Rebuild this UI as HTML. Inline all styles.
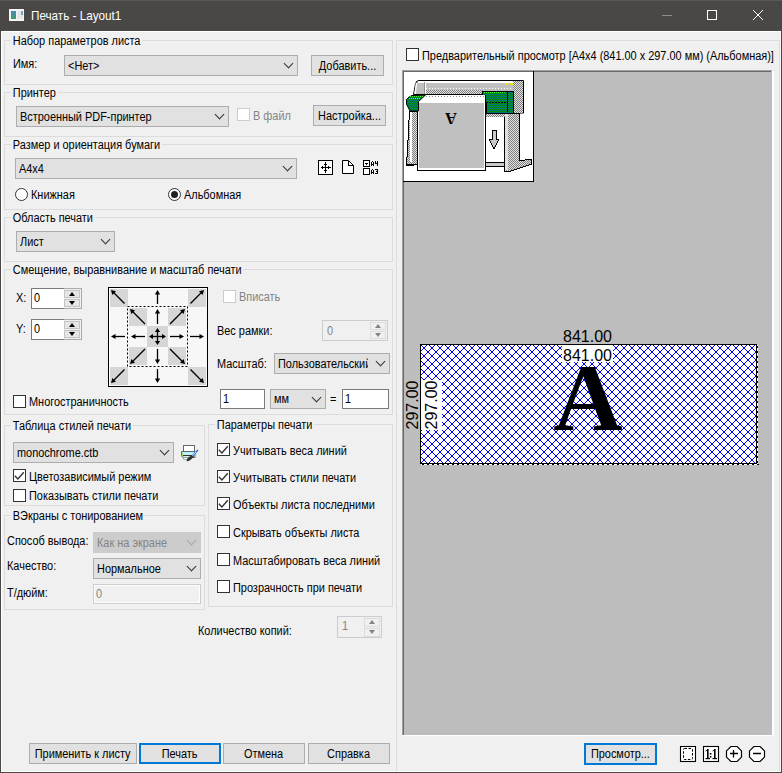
<!DOCTYPE html>
<html><head><meta charset="utf-8">
<style>
*{box-sizing:border-box;margin:0;padding:0}
html,body{width:782px;height:773px;overflow:hidden;background:#f0f0f0}
body{position:relative;font-family:"Liberation Sans",sans-serif;font-size:12px;color:#000}
.a{position:absolute}
.t{position:absolute;white-space:nowrap;line-height:17px;transform:scaleX(.91);transform-origin:0 0}
.dis{color:#838383}
.grp{position:absolute;border:1px solid #dcdcdc}
.gl{position:absolute;background:#f0f0f0;padding:0 2px;white-space:nowrap;line-height:17px;transform:scaleX(.91);transform-origin:0 0}
.s{display:inline-block;transform:scaleX(.91);transform-origin:0 50%}
.btn .s{transform-origin:50% 50%}
.cb{position:absolute;background:#e1e1e1;border:1px solid #adadad;white-space:nowrap;line-height:21px;padding-left:3px;overflow:hidden}
.cb::after{content:"";position:absolute;right:5px;top:4px;width:6px;height:6px;border-right:1px solid #333;border-bottom:1px solid #333;transform:rotate(45deg)}
.cb.dcb{background:#cccccc;border-color:#cccccc;color:#838383}
.cb.dcb::after{border-color:#a6a6a6}
.btn{position:absolute;background:#e1e1e1;border:1px solid #adadad;text-align:center;white-space:nowrap;line-height:21px}
.btn.def{border:2px solid #0078d7;line-height:19px}
.ed{position:absolute;background:#fff;border:1px solid #7a7a7a;line-height:18px;padding-left:2px;white-space:nowrap}
.ed.de{background:#f0f0f0;border-color:#cccccc;color:#838383;box-shadow:inset 0 0 0 1px #fff}
.chk{position:absolute;width:13px;height:13px;border:1px solid #333;background:#fff}
.chk.dc{border-color:#cccccc}
.rad{position:absolute;width:13px;height:13px;border:1px solid #333;border-radius:50%;background:#fff}
.rad.on::after{content:"";position:absolute;left:2px;top:2px;width:7px;height:7px;border-radius:50%;background:#222}
.spin{position:absolute;background:#fff;border:1px solid #7a7a7a}
.spin .sb{position:absolute;right:1px;width:16px;height:8px;background:#e6e6e6;border:1px solid #c4c4c4}
.chk.on{background:#fff}
.ck{position:absolute;left:0;top:0}
.spin .ta{position:absolute;width:0;height:0;border-left:3.5px solid transparent;border-right:3.5px solid transparent}
</style></head><body>
<!-- title bar -->
<div class="a" style="left:0;top:0;width:782px;height:31px;background:#4a4846;border-top:1px solid #5a5957"></div>
<div class="t" style="left:31px;top:7px;color:#fff;font-size:13px;transform:scaleX(.9)">Печать - Layout1</div>

<!-- Group 1 -->
<div class="grp" style="left:4px;top:40px;width:389px;height:45px"></div>
<div class="gl" style="left:11px;top:33px">Набор параметров листа</div>
<div class="t" style="left:13px;top:56px">Имя:</div>
<div class="cb" style="left:64px;top:55px;width:234px;height:21px"><span class="s">&lt;Нет&gt;</span></div>
<div class="btn" style="left:311px;top:55px;width:73px;height:21px"><span class="s">Добавить...</span></div>

<!-- Group 2 -->
<div class="grp" style="left:4px;top:92px;width:389px;height:45px"></div>
<div class="gl" style="left:11px;top:85px">Принтер</div>
<div class="cb" style="left:16px;top:106px;width:213px;height:21px"><span class="s">Встроенный PDF-принтер</span></div>
<div class="chk dc" style="left:237px;top:108px"></div>
<div class="t dis" style="left:253px;top:108px">В файл</div>
<div class="btn" style="left:313px;top:105px;width:73px;height:21px"><span class="s">Настройка...</span></div>

<!-- Group 3 -->
<div class="grp" style="left:4px;top:144px;width:389px;height:66px"></div>
<div class="gl" style="left:11px;top:137px">Размер и ориентация бумаги</div>
<div class="cb" style="left:15px;top:158px;width:282px;height:21px"><span class="s">A4x4</span></div>
<div class="rad" style="left:15px;top:188px"></div>
<div class="t" style="left:31px;top:187px">Книжная</div>
<div class="rad on" style="left:168px;top:188px"></div>
<div class="t" style="left:184px;top:187px">Альбомная</div>

<!-- Group 4 -->
<div class="grp" style="left:4px;top:217px;width:389px;height:45px"></div>
<div class="gl" style="left:11px;top:210px">Область печати</div>
<div class="cb" style="left:16px;top:231px;width:99px;height:21px"><span class="s">Лист</span></div>

<!-- Group 5 -->
<div class="grp" style="left:4px;top:269px;width:389px;height:146px"></div>
<svg class="a" style="left:108px;top:287px" width="100" height="100" viewBox="0 0 100 100"><rect x="0" y="0" width="100" height="100" fill="#f7f7f7"/><rect x="2" y="2" width="18" height="18" fill="#d6d6d6"/><rect x="80" y="2" width="18" height="18" fill="#d6d6d6"/><rect x="2" y="80" width="18" height="18" fill="#d6d6d6"/><rect x="80" y="80" width="18" height="18" fill="#d6d6d6"/><rect x="21" y="21" width="18" height="18" fill="#d6d6d6"/><rect x="60" y="21" width="18" height="18" fill="#d6d6d6"/><rect x="39" y="39" width="21" height="21" fill="#d6d6d6"/><rect x="21" y="60" width="18" height="18" fill="#d6d6d6"/><rect x="60" y="60" width="18" height="18" fill="#d6d6d6"/><rect x="1" y="1" width="98" height="1" fill="#fff"/><rect x="1" y="1" width="1" height="98" fill="#fff"/><rect x="0.5" y="0.5" width="99" height="99" fill="none" stroke="#000" stroke-width="1" shape-rendering="crispEdges"/><rect x="19.5" y="19.5" width="60" height="60" fill="none" stroke="#000" stroke-width="1" stroke-dasharray="2,2"/><line x1="16.5" y1="16.5" x2="5.83" y2="5.83" stroke="#000" stroke-width="1.3"/><polygon points="3.00,3.00 8.02,4.34 4.34,8.02" fill="#000"/><line x1="82.5" y1="16.5" x2="93.17" y2="5.83" stroke="#000" stroke-width="1.3"/><polygon points="96.00,3.00 94.66,8.02 90.98,4.34" fill="#000"/><line x1="16.5" y1="82.5" x2="5.83" y2="93.17" stroke="#000" stroke-width="1.3"/><polygon points="3.00,96.00 4.34,90.98 8.02,94.66" fill="#000"/><line x1="82.5" y1="82.5" x2="93.17" y2="93.17" stroke="#000" stroke-width="1.3"/><polygon points="96.00,96.00 90.98,94.66 94.66,90.98" fill="#000"/><line x1="49.5" y1="17" x2="49.50" y2="7.00" stroke="#000" stroke-width="1.3"/><polygon points="49.50,3.00 52.10,7.50 46.90,7.50" fill="#000"/><line x1="49.5" y1="82" x2="49.50" y2="92.00" stroke="#000" stroke-width="1.3"/><polygon points="49.50,96.00 46.90,91.50 52.10,91.50" fill="#000"/><line x1="17" y1="49.5" x2="7.00" y2="49.50" stroke="#000" stroke-width="1.3"/><polygon points="3.00,49.50 7.50,46.90 7.50,52.10" fill="#000"/><line x1="82" y1="49.5" x2="92.00" y2="49.50" stroke="#000" stroke-width="1.3"/><polygon points="96.00,49.50 91.50,52.10 91.50,46.90" fill="#000"/><line x1="37" y1="37" x2="24.83" y2="24.83" stroke="#000" stroke-width="1.3"/><polygon points="22.00,22.00 27.02,23.34 23.34,27.02" fill="#000"/><line x1="62" y1="37" x2="74.17" y2="24.83" stroke="#000" stroke-width="1.3"/><polygon points="77.00,22.00 75.66,27.02 71.98,23.34" fill="#000"/><line x1="37" y1="62" x2="24.83" y2="74.17" stroke="#000" stroke-width="1.3"/><polygon points="22.00,77.00 23.34,71.98 27.02,75.66" fill="#000"/><line x1="62" y1="62" x2="74.17" y2="74.17" stroke="#000" stroke-width="1.3"/><polygon points="77.00,77.00 71.98,75.66 75.66,71.98" fill="#000"/><line x1="49.5" y1="37" x2="49.50" y2="26.00" stroke="#000" stroke-width="1.3"/><polygon points="49.50,22.00 52.10,26.50 46.90,26.50" fill="#000"/><line x1="49.5" y1="62" x2="49.50" y2="73.00" stroke="#000" stroke-width="1.3"/><polygon points="49.50,77.00 46.90,72.50 52.10,72.50" fill="#000"/><line x1="37" y1="49.5" x2="27.00" y2="49.50" stroke="#000" stroke-width="1.3"/><polygon points="23.00,49.50 27.50,46.90 27.50,52.10" fill="#000"/><line x1="62" y1="49.5" x2="72.00" y2="49.50" stroke="#000" stroke-width="1.3"/><polygon points="76.00,49.50 71.50,52.10 71.50,46.90" fill="#000"/><line x1="49.5" y1="49.5" x2="49.50" y2="44.50" stroke="#000" stroke-width="1.3"/><polygon points="49.50,41.00 52.10,45.00 46.90,45.00" fill="#000"/><line x1="49.5" y1="49.5" x2="49.50" y2="54.50" stroke="#000" stroke-width="1.3"/><polygon points="49.50,58.00 46.90,54.00 52.10,54.00" fill="#000"/><line x1="49.5" y1="49.5" x2="44.50" y2="49.50" stroke="#000" stroke-width="1.3"/><polygon points="41.00,49.50 45.00,46.90 45.00,52.10" fill="#000"/><line x1="49.5" y1="49.5" x2="54.50" y2="49.50" stroke="#000" stroke-width="1.3"/><polygon points="58.00,49.50 54.00,52.10 54.00,46.90" fill="#000"/></svg>
<div class="t" style="left:16px;top:290px">X:</div>
<div class="spin" style="left:31px;top:288px;width:51px;height:21px;border-right-color:#a9a9a9"><div class="a" style="left:32px;top:-1px;width:18px;height:21px;border:1px solid #a9a9a9;border-left:none;background:#f0f0f0"></div><div class="sb" style="top:1px;height:8px"></div><div class="sb" style="top:10px;height:8px"></div><div class="ta" style="left:37px;top:3px;border-bottom:4px solid #000"></div><div class="ta" style="left:37px;top:12px;border-top:4px solid #000"></div><div class="t" style="left:2px;top:1px">0</div></div>
<div class="t" style="left:16px;top:321px">Y:</div>
<div class="spin" style="left:31px;top:319px;width:51px;height:21px;border-right-color:#a9a9a9"><div class="a" style="left:32px;top:-1px;width:18px;height:21px;border:1px solid #a9a9a9;border-left:none;background:#f0f0f0"></div><div class="sb" style="top:1px;height:8px"></div><div class="sb" style="top:10px;height:8px"></div><div class="ta" style="left:37px;top:3px;border-bottom:4px solid #000"></div><div class="ta" style="left:37px;top:12px;border-top:4px solid #000"></div><div class="t" style="left:2px;top:1px">0</div></div>
<div class="chk dc" style="left:223px;top:290px"></div>
<div class="t dis" style="left:239px;top:289px">Вписать</div>
<div class="t" style="left:217px;top:323px">Вес рамки:</div>
<div class="spin" style="left:322px;top:320px;width:66px;height:21px;background:#f0f0f0;border-color:#cccccc"><div class="sb" style="top:1px;height:8px;background:#f0f0f0;border-color:#dcdcdc"></div><div class="sb" style="top:10px;height:8px;background:#f0f0f0;border-color:#dcdcdc"></div><div class="ta" style="left:52px;top:3px;border-bottom:4px solid #838383"></div><div class="ta" style="left:52px;top:12px;border-top:4px solid #838383"></div><div class="t dis" style="left:4px;top:2px">0</div></div>
<div class="t" style="left:217px;top:356px">Масштаб:</div>
<div class="cb" style="left:274px;top:353px;width:116px;height:21px"><div class="a" style="left:3px;top:0;width:90px;height:19px;overflow:hidden"><span class="s">Пользовательский</span></div></div>
<div class="ed" style="left:220px;top:389px;width:45px;height:20px"><span class="s">1</span></div>
<div class="cb" style="left:270px;top:389px;width:56px;height:20px;line-height:18px"><span class="s">мм</span></div>
<div class="t" style="left:330px;top:391px">=</div>
<div class="ed" style="left:342px;top:389px;width:47px;height:20px"><span class="s">1</span></div>
<div class="chk" style="left:13px;top:395px"></div>
<div class="t" style="left:29px;top:394px">Многостраничность</div>

<div class="gl" style="left:11px;top:262px">Смещение, выравнивание и масштаб печати</div>

<!-- Group 6 -->
<div class="grp" style="left:4px;top:425px;width:201px;height:81px"></div>
<div class="gl" style="left:11px;top:418px">Таблица стилей печати</div>
<div class="cb" style="left:13px;top:442px;width:161px;height:21px"><span class="s">monochrome.ctb</span></div>
<div class="chk" style="left:13px;top:469px"><svg class="ck" width="11" height="11" viewBox="0 0 11 11"><path d="M0.8,5.8 L3.9,8.9 L9.8,2.3" fill="none" stroke="#333" stroke-width="1.4"/></svg></div>
<div class="t" style="left:29px;top:469px">Цветозависимый режим</div>
<div class="chk" style="left:13px;top:489px"></div>
<div class="t" style="left:29px;top:488px">Показывать стили печати</div>

<!-- Group 7 -->
<div class="grp" style="left:4px;top:515px;width:201px;height:95px"></div>
<div class="gl" style="left:11px;top:508px">ВЭкраны с тонированием</div>
<div class="t" style="left:7px;top:533px">Способ вывода:</div>
<div class="cb dcb" style="left:93px;top:532px;width:108px;height:21px"><span class="s">Как на экране</span></div>
<div class="t" style="left:7px;top:558px">Качество:</div>
<div class="cb" style="left:93px;top:558px;width:108px;height:21px"><span class="s">Нормальное</span></div>
<div class="t" style="left:7px;top:585px">Т/дюйм:</div>
<div class="ed de" style="left:93px;top:584px;width:108px;height:20px"><span class="s">0</span></div>

<!-- Group 8 -->
<div class="grp" style="left:208px;top:424px;width:185px;height:183px"></div>
<div class="gl" style="left:215px;top:417px">Параметры печати</div>
<div class="chk" style="left:217px;top:443px"><svg class="ck" width="11" height="11" viewBox="0 0 11 11"><path d="M0.8,5.8 L3.9,8.9 L9.8,2.3" fill="none" stroke="#333" stroke-width="1.4"/></svg></div>
<div class="t" style="left:233px;top:443px">Учитывать веса линий</div>
<div class="chk" style="left:217px;top:470px"><svg class="ck" width="11" height="11" viewBox="0 0 11 11"><path d="M0.8,5.8 L3.9,8.9 L9.8,2.3" fill="none" stroke="#333" stroke-width="1.4"/></svg></div>
<div class="t" style="left:233px;top:470px">Учитывать стили печати</div>
<div class="chk" style="left:217px;top:497px"><svg class="ck" width="11" height="11" viewBox="0 0 11 11"><path d="M0.8,5.8 L3.9,8.9 L9.8,2.3" fill="none" stroke="#333" stroke-width="1.4"/></svg></div>
<div class="t" style="left:233px;top:497px">Объекты листа последними</div>
<div class="chk" style="left:217px;top:525px"></div>
<div class="t" style="left:233px;top:525px">Скрывать объекты листа</div>
<div class="chk" style="left:217px;top:553px"></div>
<div class="t" style="left:233px;top:553px">Масштабировать веса линий</div>
<div class="chk" style="left:217px;top:580px"></div>
<div class="t" style="left:233px;top:580px">Прозрачность при печати</div>

<div class="t" style="left:198px;top:623px">Количество копий:</div>
<div class="spin" style="left:337px;top:616px;width:45px;height:22px;background:#f0f0f0;border-color:#cccccc"><div class="sb" style="top:1px;height:9px;background:#f0f0f0;border-color:#dcdcdc"></div><div class="sb" style="top:11px;height:9px;background:#f0f0f0;border-color:#dcdcdc"></div><div class="ta" style="left:31px;top:3px;border-bottom:4px solid #838383"></div><div class="ta" style="left:31px;top:13px;border-top:4px solid #838383"></div><div class="t dis" style="left:4px;top:1px">1</div></div>

<!-- bottom buttons -->
<div class="btn" style="left:29px;top:743px;width:108px;height:21px"><span class="s">Применить к листу</span></div>
<div class="btn def" style="left:139px;top:743px;width:82px;height:21px"><span class="s">Печать</span></div>
<div class="btn" style="left:223px;top:743px;width:82px;height:21px"><span class="s">Отмена</span></div>
<div class="btn" style="left:308px;top:743px;width:82px;height:21px"><span class="s">Справка</span></div>

<!-- right panel -->
<div class="grp" style="left:396px;top:40px;width:384px;height:745px"></div>
<div class="chk" style="left:406px;top:48px"></div>
<div class="t" style="left:422px;top:48px">Предварительный просмотр [A4x4 (841.00 x 297.00 мм) (Альбомная)]</div>
<div class="a" style="left:402px;top:70px;width:372px;height:666px;background:#c0c0c0;border:1px solid;border-color:#a0a0a0 #fff #fff #a0a0a0"></div>
<svg class="a" style="left:402px;top:70px" width="372" height="666" viewBox="0 0 372 666" shape-rendering="crispEdges"><defs><pattern id="hatch" patternUnits="userSpaceOnUse" x="6" y="2" width="8" height="8"><rect width="8" height="8" fill="#fff"/><rect x="0" y="3" width="1" height="1" fill="#0000ff"/><rect x="0" y="4" width="1" height="1" fill="#0000ff"/><rect x="1" y="2" width="1" height="1" fill="#0000ff"/><rect x="1" y="5" width="1" height="1" fill="#0000ff"/><rect x="2" y="1" width="1" height="1" fill="#0000ff"/><rect x="2" y="6" width="1" height="1" fill="#0000ff"/><rect x="3" y="0" width="1" height="1" fill="#0000ff"/><rect x="3" y="7" width="1" height="1" fill="#0000ff"/><rect x="4" y="0" width="1" height="1" fill="#0000ff"/><rect x="4" y="7" width="1" height="1" fill="#0000ff"/><rect x="5" y="1" width="1" height="1" fill="#0000ff"/><rect x="5" y="6" width="1" height="1" fill="#0000ff"/><rect x="6" y="2" width="1" height="1" fill="#0000ff"/><rect x="6" y="5" width="1" height="1" fill="#0000ff"/><rect x="7" y="3" width="1" height="1" fill="#0000ff"/><rect x="7" y="4" width="1" height="1" fill="#0000ff"/></pattern><pattern id="chk" patternUnits="userSpaceOnUse" width="2" height="2"><rect width="2" height="2" fill="#e0e0e0"/><rect width="1" height="1" fill="#808080"/><rect x="1" y="1" width="1" height="1" fill="#808080"/></pattern><pattern id="grn" patternUnits="userSpaceOnUse" width="2" height="2"><rect width="2" height="2" fill="#008000"/><rect width="1" height="1" fill="#008080"/><rect x="1" y="1" width="1" height="1" fill="#008080"/></pattern></defs><rect x="0" y="0" width="371" height="666" fill="#bdbdbd" /><rect x="0" y="0" width="370" height="1" fill="#a0a0a0" /><rect x="0" y="0" width="1" height="665" fill="#a0a0a0" /><rect x="1" y="1" width="368" height="1" fill="#696969" /><rect x="1" y="1" width="1" height="664" fill="#696969" /><rect x="370" y="0" width="1" height="666" fill="#ffffff" /><rect x="0" y="665" width="371" height="1" fill="#ffffff" /><rect x="1" y="1" width="131" height="111" fill="#ffffff" /><rect x="1" y="1" width="130" height="1" fill="#696969" /><rect x="1" y="1" width="1" height="110" fill="#696969" /><rect x="131" y="1" width="1" height="111" fill="#000" /><rect x="1" y="111" width="131" height="1" fill="#000" /><path d="M17,10.5 L121.5,10.5 L121.5,43 L84,43 L84,24.5 L11.5,24.5 L13.5,14 Q14,10.5 17,10.5 Z" fill="#c0c0c0" stroke="#000" stroke-width="1" shape-rendering="auto"/><rect x="16" y="11" width="95" height="2" fill="#ffffff" /><line x1="14.5" y1="13" x2="13" y2="24" stroke="#fff" stroke-width="1.5" shape-rendering="auto"/><rect x="22" y="12" width="1" height="12" fill="#909090" /><rect x="23" y="12" width="1" height="12" fill="#ffffff" /><rect x="24" y="18" width="1" height="1" fill="#ffffff" /><rect x="27" y="18" width="1" height="1" fill="#ffffff" /><rect x="30" y="18" width="1" height="1" fill="#ffffff" /><rect x="33" y="18" width="1" height="1" fill="#ffffff" /><rect x="36" y="18" width="1" height="1" fill="#ffffff" /><rect x="39" y="18" width="1" height="1" fill="#ffffff" /><rect x="42" y="18" width="1" height="1" fill="#ffffff" /><rect x="45" y="18" width="1" height="1" fill="#ffffff" /><rect x="48" y="18" width="1" height="1" fill="#ffffff" /><rect x="51" y="18" width="1" height="1" fill="#ffffff" /><rect x="54" y="18" width="1" height="1" fill="#ffffff" /><rect x="57" y="18" width="1" height="1" fill="#ffffff" /><rect x="60" y="18" width="1" height="1" fill="#ffffff" /><rect x="63" y="18" width="1" height="1" fill="#ffffff" /><rect x="66" y="18" width="1" height="1" fill="#ffffff" /><rect x="69" y="18" width="1" height="1" fill="#ffffff" /><rect x="72" y="18" width="1" height="1" fill="#ffffff" /><rect x="75" y="18" width="1" height="1" fill="#ffffff" /><rect x="78" y="18" width="1" height="1" fill="#ffffff" /><rect x="81" y="18" width="1" height="1" fill="#ffffff" /><rect x="84" y="18" width="1" height="1" fill="#ffffff" /><rect x="87" y="18" width="1" height="1" fill="#ffffff" /><rect x="90" y="18" width="1" height="1" fill="#ffffff" /><rect x="93" y="18" width="1" height="1" fill="#ffffff" /><rect x="96" y="18" width="1" height="1" fill="#ffffff" /><rect x="99" y="18" width="1" height="1" fill="#ffffff" /><rect x="102" y="18" width="1" height="1" fill="#ffffff" /><rect x="105" y="18" width="1" height="1" fill="#ffffff" /><rect x="108" y="18" width="1" height="1" fill="#ffffff" /><rect x="24" y="20" width="58" height="4" fill="url(#chk)" /><rect x="111" y="11" width="10" height="32" fill="url(#chk)" /><rect x="103" y="13" width="3" height="2" fill="#e8e800" /><rect x="108" y="13" width="3" height="2" fill="#e8e800" /><polygon points="80,21 111,21 111,43 84,43 84,33 80,32" fill="url(#grn)" stroke="#000" stroke-width="1" /><line x1="81" y1="32.5" x2="105" y2="32.5" stroke="#000" stroke-width="1" stroke-dasharray="2,1"/><line x1="105.5" y1="22" x2="105.5" y2="42" stroke="#000" stroke-width="1" /><rect x="82" y="22" width="1" height="1" fill="#40ff40" /><rect x="84" y="22" width="1" height="1" fill="#40ff40" /><rect x="86" y="22" width="1" height="1" fill="#40ff40" /><rect x="88" y="22" width="1" height="1" fill="#40ff40" /><rect x="90" y="22" width="1" height="1" fill="#40ff40" /><rect x="92" y="22" width="1" height="1" fill="#40ff40" /><rect x="94" y="22" width="1" height="1" fill="#40ff40" /><rect x="96" y="22" width="1" height="1" fill="#40ff40" /><rect x="98" y="22" width="1" height="1" fill="#40ff40" /><rect x="100" y="22" width="1" height="1" fill="#40ff40" /><rect x="102" y="22" width="1" height="1" fill="#40ff40" /><polygon points="7.5,41 15.5,41 15.5,94 4.5,94 5.5,80 6.5,60" fill="url(#chk)" stroke="#000" stroke-width="1" /><rect x="8" y="42" width="2" height="50" fill="#ffffff" /><rect x="4" y="94" width="8" height="2" fill="#000" /><polygon points="102.5,43 117.5,43 117.5,90.5 129.5,89.5 129.5,94 117,98.5 106,102 102.5,101.5" fill="url(#chk)" stroke="#000" stroke-width="1" /><rect x="103" y="44" width="3" height="56" fill="#e0e0e0" /><rect x="84" y="44" width="19" height="3" fill="url(#chk)" /><rect x="84" y="93" width="18" height="3" fill="#c8c8c8" /><line x1="84" y1="92.5" x2="102" y2="92.5" stroke="#000" stroke-width="1" /><line x1="84" y1="96.5" x2="102" y2="96.5" stroke="#000" stroke-width="1" /><rect x="15" y="25" width="69" height="76" fill="#000" /><rect x="16" y="25" width="67" height="75" fill="#ffffff" /><rect x="24" y="26" width="1" height="1" fill="#909090" /><rect x="27" y="26" width="1" height="1" fill="#909090" /><rect x="30" y="26" width="1" height="1" fill="#909090" /><rect x="33" y="26" width="1" height="1" fill="#909090" /><rect x="36" y="26" width="1" height="1" fill="#909090" /><rect x="39" y="26" width="1" height="1" fill="#909090" /><rect x="42" y="26" width="1" height="1" fill="#909090" /><rect x="45" y="26" width="1" height="1" fill="#909090" /><rect x="48" y="26" width="1" height="1" fill="#909090" /><rect x="51" y="26" width="1" height="1" fill="#909090" /><rect x="54" y="26" width="1" height="1" fill="#909090" /><rect x="57" y="26" width="1" height="1" fill="#909090" /><rect x="60" y="26" width="1" height="1" fill="#909090" /><rect x="63" y="26" width="1" height="1" fill="#909090" /><rect x="66" y="26" width="1" height="1" fill="#909090" /><rect x="69" y="26" width="1" height="1" fill="#909090" /><rect x="72" y="26" width="1" height="1" fill="#909090" /><rect x="75" y="26" width="1" height="1" fill="#909090" /><rect x="78" y="26" width="1" height="1" fill="#909090" /><rect x="81" y="26" width="1" height="1" fill="#909090" /><rect x="17" y="33" width="65" height="65" fill="#c0c0c0" /><text x="49" y="32" font-family="Liberation Serif" font-weight="bold" font-size="16" text-anchor="middle" transform="rotate(180 49 37.5)" fill="#000">A</text><polygon points="4.5,29.5 7,27 10,25.5 23.5,25 16.5,31.5 16.5,41 8,41 4.5,34" fill="url(#grn)" stroke="#000" stroke-width="1" shape-rendering="auto"/><rect x="8" y="26" width="1" height="1" fill="#40ff40" /><rect x="10" y="26" width="1" height="1" fill="#40ff40" /><rect x="12" y="26" width="1" height="1" fill="#40ff40" /><rect x="14" y="26" width="1" height="1" fill="#40ff40" /><rect x="16" y="26" width="1" height="1" fill="#40ff40" /><rect x="18" y="26" width="1" height="1" fill="#40ff40" /><rect x="20" y="26" width="1" height="1" fill="#40ff40" /><rect x="7" y="28" width="1" height="1" fill="#40ff40" /><rect x="9" y="28" width="1" height="1" fill="#40ff40" /><rect x="11" y="28" width="1" height="1" fill="#40ff40" /><rect x="13" y="28" width="1" height="1" fill="#40ff40" /><rect x="15" y="28" width="1" height="1" fill="#40ff40" /><rect x="17" y="28" width="1" height="1" fill="#40ff40" /><polygon points="90,60 94,60 94,69 97,69 92,79 87,69 90,69" fill="#c8c8c8" stroke="#000" stroke-width="1" /><rect x="18" y="274" width="337" height="120" fill="#000" /><rect x="19" y="275" width="335" height="118" fill="url(#hatch)" /><rect x="355" y="275" width="1" height="120" fill="#fff" /><rect x="19" y="394" width="337" height="1" fill="#fff" /><rect x="355" y="276" width="1" height="2" fill="#000" /><rect x="355" y="281" width="1" height="2" fill="#000" /><rect x="355" y="286" width="1" height="2" fill="#000" /><rect x="355" y="291" width="1" height="2" fill="#000" /><rect x="355" y="296" width="1" height="2" fill="#000" /><rect x="355" y="301" width="1" height="2" fill="#000" /><rect x="355" y="306" width="1" height="2" fill="#000" /><rect x="355" y="311" width="1" height="2" fill="#000" /><rect x="355" y="316" width="1" height="2" fill="#000" /><rect x="355" y="321" width="1" height="2" fill="#000" /><rect x="355" y="326" width="1" height="2" fill="#000" /><rect x="355" y="331" width="1" height="2" fill="#000" /><rect x="355" y="336" width="1" height="2" fill="#000" /><rect x="355" y="341" width="1" height="2" fill="#000" /><rect x="355" y="346" width="1" height="2" fill="#000" /><rect x="355" y="351" width="1" height="2" fill="#000" /><rect x="355" y="356" width="1" height="2" fill="#000" /><rect x="355" y="361" width="1" height="2" fill="#000" /><rect x="355" y="366" width="1" height="2" fill="#000" /><rect x="355" y="371" width="1" height="2" fill="#000" /><rect x="355" y="376" width="1" height="2" fill="#000" /><rect x="355" y="381" width="1" height="2" fill="#000" /><rect x="355" y="386" width="1" height="2" fill="#000" /><rect x="355" y="391" width="1" height="2" fill="#000" /><rect x="20" y="394" width="2" height="1" fill="#000" /><rect x="25" y="394" width="2" height="1" fill="#000" /><rect x="30" y="394" width="2" height="1" fill="#000" /><rect x="35" y="394" width="2" height="1" fill="#000" /><rect x="40" y="394" width="2" height="1" fill="#000" /><rect x="45" y="394" width="2" height="1" fill="#000" /><rect x="50" y="394" width="2" height="1" fill="#000" /><rect x="55" y="394" width="2" height="1" fill="#000" /><rect x="60" y="394" width="2" height="1" fill="#000" /><rect x="65" y="394" width="2" height="1" fill="#000" /><rect x="70" y="394" width="2" height="1" fill="#000" /><rect x="75" y="394" width="2" height="1" fill="#000" /><rect x="80" y="394" width="2" height="1" fill="#000" /><rect x="85" y="394" width="2" height="1" fill="#000" /><rect x="90" y="394" width="2" height="1" fill="#000" /><rect x="95" y="394" width="2" height="1" fill="#000" /><rect x="100" y="394" width="2" height="1" fill="#000" /><rect x="105" y="394" width="2" height="1" fill="#000" /><rect x="110" y="394" width="2" height="1" fill="#000" /><rect x="115" y="394" width="2" height="1" fill="#000" /><rect x="120" y="394" width="2" height="1" fill="#000" /><rect x="125" y="394" width="2" height="1" fill="#000" /><rect x="130" y="394" width="2" height="1" fill="#000" /><rect x="135" y="394" width="2" height="1" fill="#000" /><rect x="140" y="394" width="2" height="1" fill="#000" /><rect x="145" y="394" width="2" height="1" fill="#000" /><rect x="150" y="394" width="2" height="1" fill="#000" /><rect x="155" y="394" width="2" height="1" fill="#000" /><rect x="160" y="394" width="2" height="1" fill="#000" /><rect x="165" y="394" width="2" height="1" fill="#000" /><rect x="170" y="394" width="2" height="1" fill="#000" /><rect x="175" y="394" width="2" height="1" fill="#000" /><rect x="180" y="394" width="2" height="1" fill="#000" /><rect x="185" y="394" width="2" height="1" fill="#000" /><rect x="190" y="394" width="2" height="1" fill="#000" /><rect x="195" y="394" width="2" height="1" fill="#000" /><rect x="200" y="394" width="2" height="1" fill="#000" /><rect x="205" y="394" width="2" height="1" fill="#000" /><rect x="210" y="394" width="2" height="1" fill="#000" /><rect x="215" y="394" width="2" height="1" fill="#000" /><rect x="220" y="394" width="2" height="1" fill="#000" /><rect x="225" y="394" width="2" height="1" fill="#000" /><rect x="230" y="394" width="2" height="1" fill="#000" /><rect x="235" y="394" width="2" height="1" fill="#000" /><rect x="240" y="394" width="2" height="1" fill="#000" /><rect x="245" y="394" width="2" height="1" fill="#000" /><rect x="250" y="394" width="2" height="1" fill="#000" /><rect x="255" y="394" width="2" height="1" fill="#000" /><rect x="260" y="394" width="2" height="1" fill="#000" /><rect x="265" y="394" width="2" height="1" fill="#000" /><rect x="270" y="394" width="2" height="1" fill="#000" /><rect x="275" y="394" width="2" height="1" fill="#000" /><rect x="280" y="394" width="2" height="1" fill="#000" /><rect x="285" y="394" width="2" height="1" fill="#000" /><rect x="290" y="394" width="2" height="1" fill="#000" /><rect x="295" y="394" width="2" height="1" fill="#000" /><rect x="300" y="394" width="2" height="1" fill="#000" /><rect x="305" y="394" width="2" height="1" fill="#000" /><rect x="310" y="394" width="2" height="1" fill="#000" /><rect x="315" y="394" width="2" height="1" fill="#000" /><rect x="320" y="394" width="2" height="1" fill="#000" /><rect x="325" y="394" width="2" height="1" fill="#000" /><rect x="330" y="394" width="2" height="1" fill="#000" /><rect x="335" y="394" width="2" height="1" fill="#000" /><rect x="340" y="394" width="2" height="1" fill="#000" /><rect x="345" y="394" width="2" height="1" fill="#000" /><rect x="350" y="394" width="2" height="1" fill="#000" /><rect x="355" y="394" width="2" height="1" fill="#000" /><rect x="160" y="275" width="51" height="17" fill="#ffffff" /><rect x="19" y="310" width="21" height="50" fill="#ffffff" /></svg>
<div class="t" style="left:563px;top:328px;font-size:16px;line-height:18px;letter-spacing:0;transform:none">841.00</div>
<div class="t" style="left:563px;top:347px;font-size:16px;line-height:18px;letter-spacing:0;transform:none">841.00</div>
<div class="t" style="left:383px;top:396px;width:60px;text-align:center;font-size:16px;line-height:18px;letter-spacing:0;transform:rotate(-90deg);transform-origin:50% 50%">297.00</div>
<div class="t" style="left:402px;top:396px;width:60px;text-align:center;font-size:16px;line-height:18px;letter-spacing:0;transform:rotate(-90deg);transform-origin:50% 50%">297.00</div>
<div class="t" style="left:548px;top:348px;width:80px;text-align:center;font-family:'Liberation Serif',serif;font-weight:bold;font-size:96px;line-height:100px;letter-spacing:0;transform:none">A</div>
<div class="btn def" style="left:584px;top:743px;width:73px;height:22px"><span class="s">Просмотр...</span></div>
<svg class="a" style="left:316px;top:158px" width="66" height="20" viewBox="0 0 66 20" shape-rendering="crispEdges"><rect x="2" y="2" width="15" height="15" fill="#000"/><rect x="3" y="3" width="13" height="13" fill="#fff"/><rect x="5" y="9" width="10" height="1" fill="#000"/><rect x="9" y="4" width="1" height="11" fill="#000"/><rect x="8" y="6" width="3" height="1" fill="#000"/><rect x="8" y="12" width="3" height="1" fill="#000"/><rect x="6" y="8" width="1" height="3" fill="#000"/><rect x="12" y="8" width="1" height="3" fill="#000"/><path d="M26.5,2.5 L32.5,2.5 L37.5,7.5 L37.5,15.5 L26.5,15.5 Z" fill="#fff" stroke="#000" stroke-width="1" shape-rendering="auto"/><path d="M32.5,2.5 L32.5,7.5 L37.5,7.5" fill="none" stroke="#000" stroke-width="1"/><rect x="47" y="2" width="7" height="7" fill="#000"/><rect x="48" y="3" width="5" height="5" fill="#fff"/><rect x="49" y="5" width="3" height="1" fill="#000"/><rect x="50" y="6" width="1" height="1" fill="#000"/><rect x="47" y="10" width="7" height="7" fill="#000"/><rect x="48" y="11" width="5" height="5" fill="#fff"/><rect x="56" y="3" width="1" height="1" fill="#000"/><rect x="55" y="4" width="1" height="4" fill="#000"/><rect x="57" y="4" width="1" height="4" fill="#000"/><rect x="56" y="6" width="1" height="1" fill="#000"/><rect x="56" y="11" width="1" height="1" fill="#000"/><rect x="55" y="12" width="1" height="4" fill="#000"/><rect x="57" y="12" width="1" height="4" fill="#000"/><rect x="56" y="14" width="1" height="1" fill="#000"/><rect x="59" y="3" width="1" height="2" fill="#000"/><rect x="61" y="3" width="1" height="5" fill="#000"/><rect x="59" y="5" width="3" height="1" fill="#000"/><rect x="59" y="11" width="3" height="1" fill="#000"/><rect x="61" y="12" width="1" height="4" fill="#000"/><rect x="60" y="13" width="1" height="1" fill="#000"/><rect x="59" y="15" width="3" height="1" fill="#000"/></svg>
<svg class="a" style="left:180px;top:444px" width="20" height="20" viewBox="0 0 20 20"><defs><linearGradient id="pg" x1="0" y1="0" x2="0" y2="1"><stop offset="0" stop-color="#a8f0ff"/><stop offset="1" stop-color="#dfeeee"/></linearGradient></defs><rect x="3.5" y="1.5" width="11" height="6" fill="#fff" stroke="#666" stroke-width="1"/><path d="M1.5,7.5 L15,7.5 L15,13.5 L4,13.5 Q1.5,13.5 1.5,11 Z" fill="url(#pg)" stroke="#666" stroke-width="1"/><rect x="2" y="9" width="1" height="3" fill="#b0e060"/><rect x="3" y="11" width="9" height="1" fill="#333"/><path d="M3.5,13.5 L10,13.5 L9,15.5 L3.5,15.5 Z" fill="#fff" stroke="#8aa" stroke-width="0.8"/><path d="M6.5,17 Q6.5,14.5 9,13 L12,11 L14,12.5 L10.5,16 Q8.5,17.5 6.5,17 Z" fill="#333"/><path d="M12,11 L17.5,5.5 L18.5,6.5 L13.5,12 Z" fill="#1a6ee0"/><path d="M12.5,11.5 L16,8" stroke="#fff" stroke-width="0.7"/></svg>
<svg class="a" style="left:9px;top:9px" width="15" height="12" viewBox="0 0 15 12"><defs><linearGradient id="tg" x1="0" y1="0" x2="0" y2="1"><stop offset="0" stop-color="#4a8ab8"/><stop offset="1" stop-color="#3aa060"/></linearGradient></defs><rect x="0" y="0" width="15" height="12" fill="#f4f4f4"/><rect x="2" y="2" width="5" height="8" fill="url(#tg)"/><rect x="8" y="2" width="4" height="8" fill="#e6e6e6"/><rect x="12" y="2" width="2" height="4" fill="#6aa8c0"/><rect x="12" y="6" width="2" height="4" fill="#e6e6e6"/></svg>
<svg class="a" style="left:650px;top:0" width="132" height="31" viewBox="0 0 132 31" shape-rendering="crispEdges"><rect x="12" y="15" width="10" height="1" fill="#8c8b89"/><rect x="57.5" y="10.5" width="9" height="9" fill="none" stroke="#fff" stroke-width="1"/><path d="M103,10 L113,20 M113,10 L103,20" stroke="#fff" stroke-width="1" shape-rendering="auto"/></svg>
<svg class="a" style="left:678px;top:744px" width="90" height="20" viewBox="0 0 90 20"><rect x="2.5" y="2.5" width="15" height="15" fill="#fff" stroke="#000" stroke-width="1.1"/><rect x="5.5" y="4.5" width="9" height="11" rx="1" fill="none" stroke="#000" stroke-width="1" stroke-dasharray="2.5,1.5"/><rect x="25.5" y="2.5" width="15" height="15" fill="#fff" stroke="#000" stroke-width="1.1"/><rect x="29" y="5" width="1.6" height="10" fill="#000"/><path d="M27,7.5 L29.5,5 L30,6.5 Z" fill="#000"/><rect x="27.5" y="14" width="4.5" height="1.2" fill="#000"/><rect x="36" y="5" width="1.6" height="10" fill="#000"/><path d="M34,7.5 L36.5,5 L37,6.5 Z" fill="#000"/><rect x="34.5" y="14" width="4.5" height="1.2" fill="#000"/><rect x="31.799999999999955" y="9" width="1.6" height="1.6" fill="#000"/><rect x="31.799999999999955" y="12" width="1.6" height="1.6" fill="#000"/><polygon points="52.9,2.5 59.1,2.5 63.5,6.9 63.5,13.1 59.1,17.5 52.9,17.5 48.5,13.1 48.5,6.9" fill="#fff" stroke="#000" stroke-width="1.2"/><path d="M52,9.5 L60,9.5 M55.5,6 L55.5,13.5" stroke="#000" stroke-width="1.3"/><polygon points="75.9,2.5 82.1,2.5 86.5,6.9 86.5,13.1 82.1,17.5 75.9,17.5 71.5,13.1 71.5,6.9" fill="#fff" stroke="#000" stroke-width="1.2"/><path d="M75,9.5 L83,9.5" stroke="#000" stroke-width="1.5"/></svg>
<div class="a" style="left:1px;top:31px;width:780px;height:741px;border:1px solid #fff;border-right-color:#f7f7f7;border-bottom-color:#fff"></div>
<div class="a" style="left:0;top:31px;width:782px;height:742px;border:1px solid #4a4846;border-top:none"></div>
</body></html>
